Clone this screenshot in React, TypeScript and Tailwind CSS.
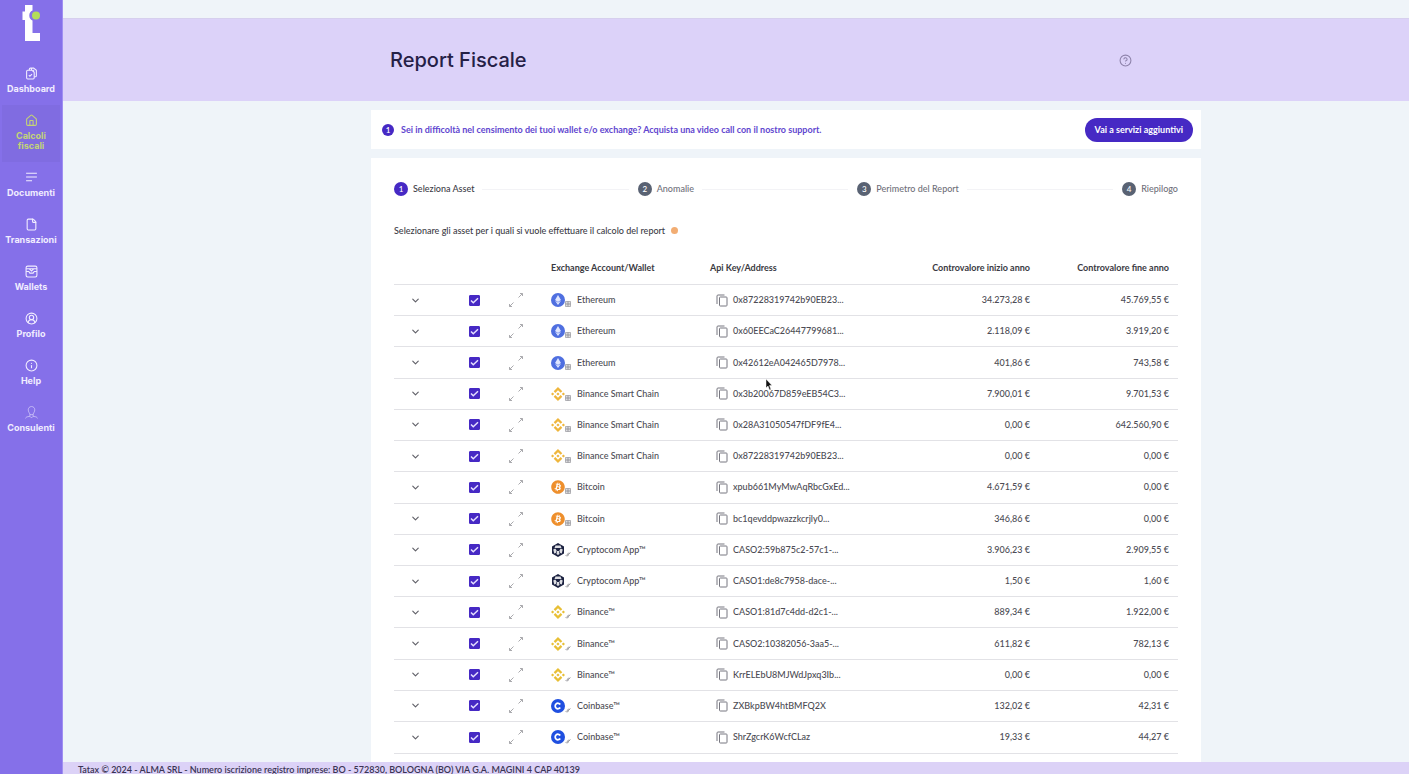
import type { ReactNode } from "react";
import {
  ChevronDown,
  CircleHelp,
  CircleUserRound,
  File,
  House,
  Info,
} from "lucide-react";
import { FaBitcoin, FaEthereum } from "react-icons/fa";
import { SiBinance } from "react-icons/si";

type Coin = "eth" | "bsc" | "btc" | "cro" | "binance" | "coinbase";

const names: Record<Coin, string> = {
  eth: "Ethereum",
  bsc: "Binance Smart Chain",
  btc: "Bitcoin",
  cro: "Cryptocom App™",
  binance: "Binance™",
  coinbase: "Coinbase™",
};

const assets: { coin: Coin; address: string; start: string; end: string }[] = [
  { coin: "eth", address: "0x87228319742b90EB23...", start: "34.273,28 €", end: "45.769,55 €" },
  { coin: "eth", address: "0x60EECaC26447799681...", start: "2.118,09 €", end: "3.919,20 €" },
  { coin: "eth", address: "0x42612eA042465D7978...", start: "401,86 €", end: "743,58 €" },
  { coin: "bsc", address: "0x3b20067D859eEB54C3...", start: "7.900,01 €", end: "9.701,53 €" },
  { coin: "bsc", address: "0x28A31050547fDF9fE4...", start: "0,00 €", end: "642.560,90 €" },
  { coin: "bsc", address: "0x87228319742b90EB23...", start: "0,00 €", end: "0,00 €" },
  { coin: "btc", address: "xpub661MyMwAqRbcGxEd...", start: "4.671,59 €", end: "0,00 €" },
  { coin: "btc", address: "bc1qevddpwazzkcrjly0...", start: "346,86 €", end: "0,00 €" },
  { coin: "cro", address: "CASO2:59b875c2-57c1-...", start: "3.906,23 €", end: "2.909,55 €" },
  { coin: "cro", address: "CASO1:de8c7958-dace-...", start: "1,50 €", end: "1,60 €" },
  { coin: "binance", address: "CASO1:81d7c4dd-d2c1-...", start: "889,34 €", end: "1.922,00 €" },
  { coin: "binance", address: "CASO2:10382056-3aa5-...", start: "611,82 €", end: "782,13 €" },
  { coin: "binance", address: "KrrELEbU8MJWdJpxq3Ib...", start: "0,00 €", end: "0,00 €" },
  { coin: "coinbase", address: "ZXBkpBW4htBMFQ2X", start: "132,02 €", end: "42,31 €" },
  { coin: "coinbase", address: "ShrZgcrK6WcfCLaz", start: "19,33 €", end: "44,27 €" },
];

const steps = ["Seleziona Asset", "Anomalie", "Perimetro del Report", "Riepilogo"];

function Logo() {
  return (
    <svg className="h-9 w-5" viewBox="0 0 20 36" fill="none">
      <path d="M4 0h7.500v5.500a5.500 5.500 0 0 0 0 10V28H19v8H4V15H1.500V6.500H4z" fill="#fff" />
      <circle cx="15" cy="10.500" r="4" fill="#b4dc5a" />
    </svg>
  );
}

function DashboardIcon() {
  return (
    <svg className="size-[13px]" viewBox="0 0 24 24" fill="none" stroke="currentColor" strokeWidth={2}>
      <path d="M8 6V4a2 2 0 0 1 2-2h6l5 4v10a2 2 0 0 1-2 2h-2" />
      <path d="M5 6h8l4 4v10a2 2 0 0 1-2 2H5a2 2 0 0 1-2-2V8a2 2 0 0 1 2-2z" />
      <path d="m7 15 2 2 4-4M12 2v4M16 5v4" />
    </svg>
  );
}

function LinesIcon() {
  return (
    <svg className="size-[13px]" viewBox="0 0 24 24" fill="none" stroke="currentColor" strokeWidth={2}>
      <path d="M2 4h20M2 11h20M2 18h11" />
    </svg>
  );
}

function WalletIcon() {
  return (
    <svg className="size-[13px]" viewBox="0 0 24 24" fill="none" stroke="currentColor" strokeWidth={2}>
      <rect x="2" y="2" width="20" height="20" rx="3" />
      <path d="M2 7h20M2 12h5l2 3h6l2-3h5M8 7l4 4 4-4" />
    </svg>
  );
}

function AdvisorIcon() {
  return (
    <svg className="size-[13px]" viewBox="0 0 24 24" fill="none" stroke="currentColor" strokeWidth={1}>
      <path d="M12 1c-4 0-6 3-6 6 0 4 2 5 3 8v4l3 3 3-3v-4c1-3 3-4 3-8 0-3-2-6-6-6z" />
      <path d="M9 16h6M9 19l-5 1c-2 .5-3 2-3 3M15 19l5 1c2 .5 3 2 3 3" />
    </svg>
  );
}

const menu: { label: string; icon: ReactNode; active?: boolean }[] = [
  { label: "Dashboard", icon: <DashboardIcon /> },
  { label: "Calcoli fiscali", icon: <House size={13} />, active: true },
  { label: "Documenti", icon: <LinesIcon /> },
  { label: "Transazioni", icon: <File size={13} /> },
  { label: "Wallets", icon: <WalletIcon /> },
  { label: "Profilo", icon: <CircleUserRound size={13} /> },
  { label: "Help", icon: <Info size={13} /> },
  { label: "Consulenti", icon: <AdvisorIcon /> },
];

function CoinIcon({ coin }: { coin: Coin }) {
  switch (coin) {
    case "eth":
      return (
        <span className="flex size-[14px] items-center justify-center rounded-full bg-[#4f6fe0]">
          <FaEthereum className="size-[10px] text-[#dfe6ff]" />
        </span>
      );
    case "btc":
      return <FaBitcoin className="size-[14px] text-[#ee8f2c]" />;
    case "bsc":
      return <SiBinance className="size-[14px] stroke-[#efb63c] text-[#efb63c]" />;
    case "binance":
      return <SiBinance className="size-[14px] stroke-[#e8bf35] text-[#e8bf35]" />;
    case "cro":
      return (
        <svg className="size-[14px]" viewBox="0 0 28 28">
          <path d="M14 0l12 7v14l-12 7L2 21V7z" fill="#1b2140" />
          <path d="M9 5h10l2 5H7zM4.500 13l4-2 3 4-2 5-3 1zM23.500 13l-4-2-3 4 2 5 3 1zM12 16h4l1 6-3 2-3-2z" fill="#fff" opacity=".85" />
          <path d="M11 11h6l-1 5h-4z" fill="#1b2140" />
        </svg>
      );
    case "coinbase":
      return (
        <svg className="size-[14px]" viewBox="0 0 28 28" fill="none">
          <circle cx="14" cy="14" r="14" fill="#1f4fe0" />
          <path d="M18.500 11a5.500 5.500 0 1 0 0 6" stroke="#fff" strokeWidth="3.500" />
        </svg>
      );
  }
}

// Grid for on-chain wallets, link for exchange connections
function SourceIcon({ coin }: { coin: Coin }) {
  const onChain = coin === "eth" || coin === "bsc" || coin === "btc";
  return (
    <svg className="size-[6px] self-end" viewBox="0 0 12 12" fill="none" stroke="#85858c">
      {onChain ? (
        <path d="M1 1h10v10H1zM1 4.500h10M1 7.500h10M4.500 1v10M7.500 1v10" strokeWidth="1.200" />
      ) : (
        <path d="M1 10l3-3 2 1 5-5M5 5l4-1M3 10l4-1" strokeWidth="1.500" />
      )}
    </svg>
  );
}

function ExpandIcon() {
  return (
    <svg className="size-4" viewBox="0 0 16 16" fill="none" stroke="#aaaaae" strokeWidth="1">
      <path d="M12 1.500h2.500V4M14.500 1.500L10.500 5.500M4 14.500H1.500V12M1.500 14.500l4-4" />
    </svg>
  );
}

function CopyIcon() {
  return (
    <svg className="h-[13px] w-3" viewBox="0 0 24 26" fill="none" stroke="#777780" strokeWidth="2">
      <rect x="7" y="6" width="15" height="18" rx="1.500" />
      <path d="M2 20V4a2 2 0 0 1 2-2h13" />
    </svg>
  );
}

function Sidebar() {
  return (
    <aside className="flex w-[63px] shrink-0 flex-col items-center border-r border-[#a08ff2] bg-[#8570e9] pt-[5px] font-[Inter,sans-serif]">
      <Logo />
      <nav className="mt-[17px] w-full px-[2px]">
        {menu.map((item) => (
          <a
            key={item.label}
            href="#"
            className={`flex flex-col items-center gap-1 px-2 pt-[9px] pb-[11px] text-center text-[9px] leading-[10px] font-bold ${
              item.active ? "bg-[#806ce1] text-[#c3d477]" : "text-[#f1edff]"
            }`}
          >
            {item.icon}
            {item.label}
          </a>
        ))}
      </nav>
    </aside>
  );
}

function Stepper() {
  return (
    <ol className="flex items-center gap-1">
      {steps.map((step, i) => (
        <li key={step} className={`flex items-center gap-[5px] ${i > 0 ? "flex-auto" : ""}`}>
          {i > 0 && <span className="mx-1 h-px flex-1 bg-[#f3f3f6]" />}
          <span
            className={`flex size-[14px] shrink-0 items-center justify-center rounded-full text-[8px] font-medium text-white ${
              i === 0 ? "bg-[#4629c4]" : "bg-[#596273]"
            }`}
          >
            {i + 1}
          </span>
          <span className={`text-[9px] font-medium ${i === 0 ? "text-[#3c3c46]" : "text-[#70707a]"}`}>
            {step}
          </span>
        </li>
      ))}
    </ol>
  );
}

function AssetTable() {
  return (
    <table className="mt-[15px] h-[501px] w-full table-fixed text-[9px] leading-3 font-medium text-[#4c4c54]">
      <colgroup>
        <col className="w-[60px]" />
        <col className="w-[41px]" />
        <col className="w-[41px]" />
        <col className="w-[166px]" />
        <col className="w-[160px]" />
        <col className="w-[176px]" />
        <col />
      </colgroup>
      <thead>
        <tr className="h-8 border-b border-[#e2e2e6] text-[#3a3a42]">
          <th colSpan={3} />
          <th className="pl-[15px] text-left font-bold">Exchange Account/Wallet</th>
          <th className="pl-2 text-left font-bold">Api Key/Address</th>
          <th className="pr-2 text-right font-bold">Controvalore inizio anno</th>
          <th className="pr-[9px] text-right font-bold">Controvalore fine anno</th>
        </tr>
      </thead>
      <tbody>
        {assets.map((asset, i) => (
          <tr key={i} className="h-[31px] border-b border-[#e2e2e6]">
            <td className="pl-4">
              <button className="block" aria-label="Mostra dettagli">
                <ChevronDown size={11} strokeWidth={2.5} className="text-[#606068]" />
              </button>
            </td>
            <td>
              <label className="relative mx-auto block size-[11px]">
                <input
                  type="checkbox"
                  defaultChecked
                  aria-label={`Seleziona ${names[asset.coin]}`}
                  className="peer block size-[11px] appearance-none rounded-[1px] border border-[#4629c4] checked:bg-[#4629c4]"
                />
                <svg
                  className="pointer-events-none absolute inset-0 hidden size-[11px] peer-checked:block"
                  viewBox="0 0 22 22"
                  fill="none"
                  stroke="#e6e0ff"
                  strokeWidth="3"
                >
                  <path d="m4 11 4.500 4.500L18 6.500" />
                </svg>
              </label>
            </td>
            <td>
              <button className="mx-auto block" aria-label="Espandi">
                <ExpandIcon />
              </button>
            </td>
            <td className="pl-[15px]">
              <div className="flex items-center">
                <CoinIcon coin={asset.coin} />
                <SourceIcon coin={asset.coin} />
                <span className="ml-[6px]">{names[asset.coin]}</span>
              </div>
            </td>
            <td className="pl-[14px]">
              <div className="flex items-center gap-[5px]">
                <button aria-label="Copia">
                  <CopyIcon />
                </button>
                {asset.address}
              </div>
            </td>
            <td className="pr-2 text-right">{asset.start}</td>
            <td className="pr-[9px] text-right">{asset.end}</td>
          </tr>
        ))}
      </tbody>
    </table>
  );
}

export default function App() {
  return (
    <div className="relative flex h-screen overflow-hidden bg-[#eff4f9] font-[Lato,sans-serif]">
      <Sidebar />
      <div className="flex min-w-0 flex-1 flex-col">
        <header className="mt-[18px] border-t border-[#d6cfee] bg-[#dcd2f9] pl-[100px]">
          <div className="mx-auto flex h-[82px] max-w-[830px] items-center justify-between pr-[69px] pl-[19px]">
            <h1 className="font-[Inter,sans-serif] text-[20px] font-medium text-[#252046]">Report Fiscale</h1>
            <button aria-label="Aiuto">
              <CircleHelp size={13} className="text-[#8e83ab]" />
            </button>
          </div>
        </header>

        <main className="min-h-0 flex-1 pl-[100px]">
          <div className="mx-auto mt-[9px] flex max-w-[830px] flex-col gap-[9px]">
            {/* Support banner */}
            <section className="flex h-[39px] items-center bg-white pr-2 pl-[11px]">
              <span className="flex size-3 items-center justify-center rounded-full bg-[#4629c4] text-[8px] font-semibold text-white">
                1
              </span>
              <p className="ml-[7px] flex-1 text-[9px] font-bold text-[#6146cf]">
                Sei in difficoltà nel censimento dei tuoi wallet e/o exchange? Acquista una video call con il nostro support.
              </p>
              <button className="h-6 rounded-full bg-[#4629c4] px-[10px] text-[9px] font-bold text-white">
                Vai a servizi aggiuntivi
              </button>
            </section>

            {/* Asset selection */}
            <section className="bg-white px-[23px] pt-6 pb-4">
              <Stepper />
              <div className="mt-7 flex items-center gap-[6px]">
                <p className="text-[9px] font-medium text-[#3c3c46]">
                  Selezionare gli asset per i quali si vuole effettuare il calcolo del report
                </p>
                <span className="size-[7px] rounded-full bg-[#f2ad73]" />
              </div>
              <AssetTable />
            </section>
          </div>
        </main>

        <footer className="z-10 h-3 shrink-0 bg-[#dcd2f7] pl-[15px] text-[9px] leading-4 font-semibold text-[#3a3454]">
          Tatax © 2024 - ALMA SRL - Numero iscrizione registro imprese: BO - 572830, BOLOGNA (BO) VIA G.A. MAGINI 4 CAP 40139
        </footer>
      </div>

      <svg className="pointer-events-none absolute top-[379px] left-[765px] h-3 w-2" viewBox="0 0 8 12">
        <path d="M1 0l6 6.500H4.500L6 10.500l-1.500.5-1.500-4L1 9z" fill="#111" stroke="#fff" strokeWidth=".5" />
      </svg>
    </div>
  );
}
